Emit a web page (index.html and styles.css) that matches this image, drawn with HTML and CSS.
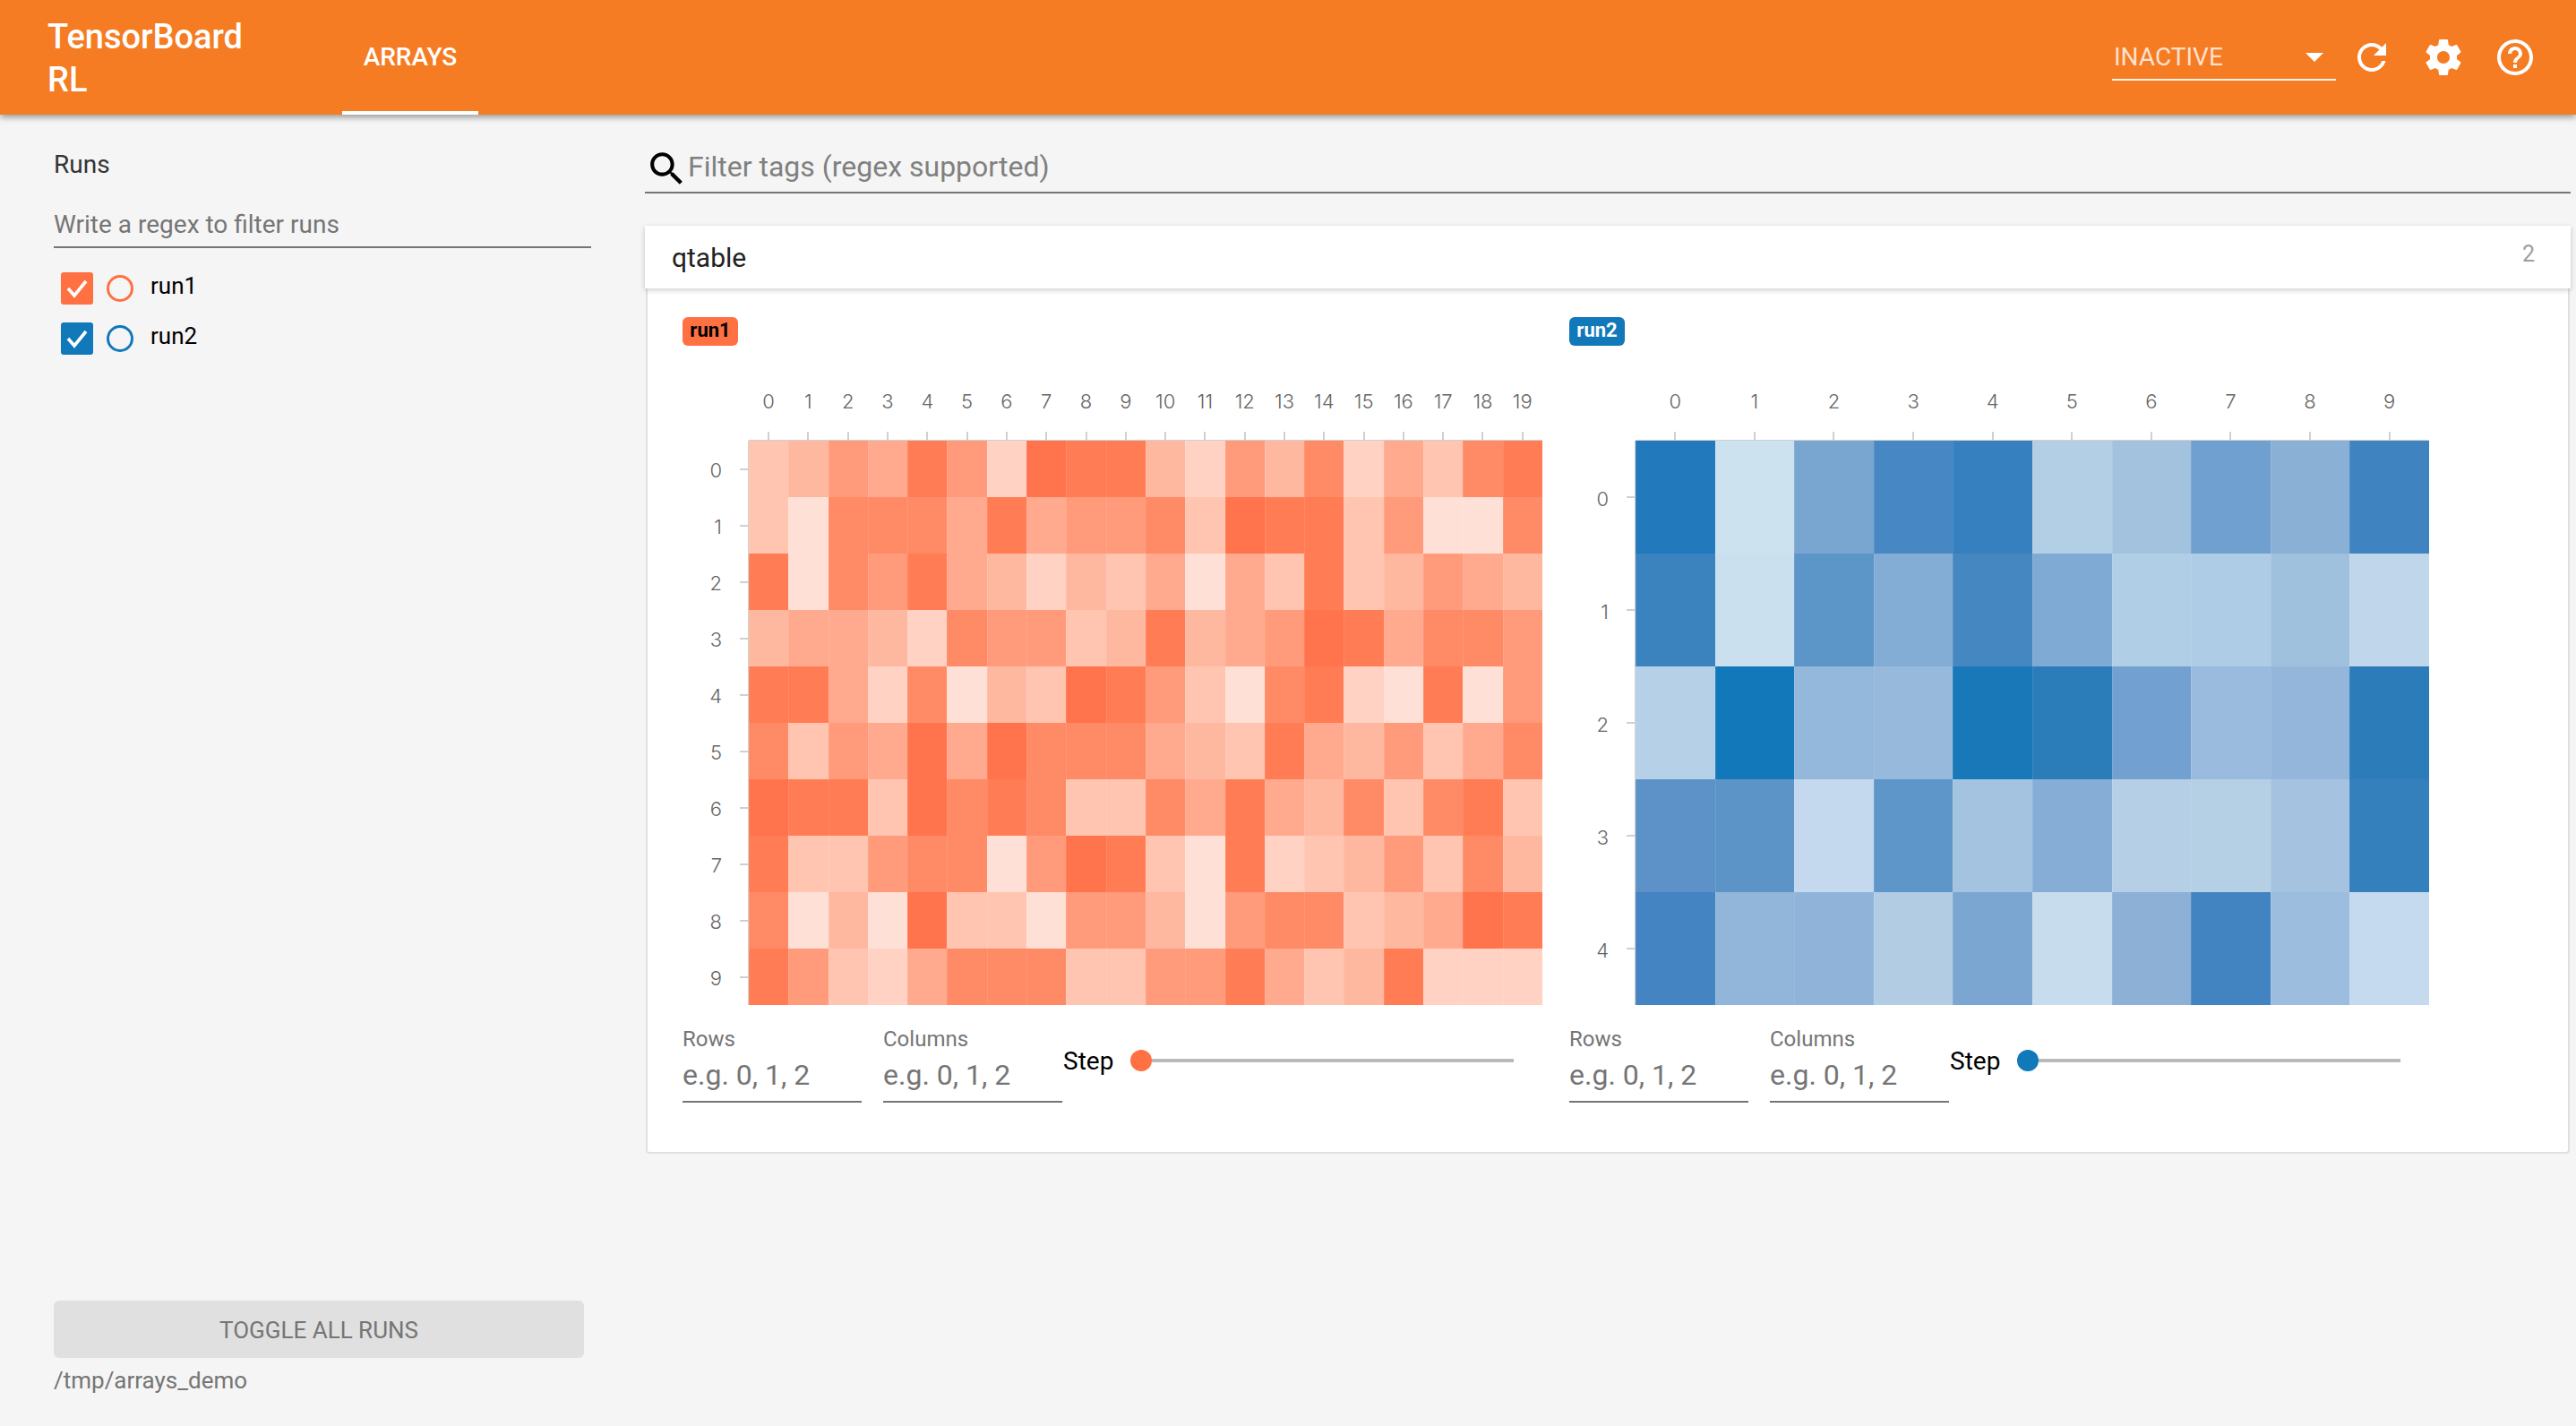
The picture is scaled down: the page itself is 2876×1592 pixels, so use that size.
FILE: index.html
```html
<!DOCTYPE html>
<html lang="en">
<head>
<meta charset="utf-8">
<title>TensorBoard RL</title>
<link rel="stylesheet" href="styles.css">
</head>
<body>
<header class="topbar">
  <div class="brand">TensorBoard<br>RL</div>
  <nav class="tabs"><a class="tab">ARRAYS</a></nav>
  <div class="topbar-right">
    <div class="select"><span>INACTIVE</span><i class="caret"></i></div>
    <button class="icon-btn"><svg viewBox="0 0 24 24"><path d="M17.65 6.35C16.2 4.9 14.21 4 12 4c-4.42 0-7.99 3.58-7.99 8s3.57 8 7.99 8c3.73 0 6.84-2.55 7.73-6h-2.08c-.82 2.33-3.04 4-5.65 4-3.31 0-6-2.69-6-6s2.69-6 6-6c1.66 0 3.14.69 4.22 1.78L13 11h7V4l-2.35 2.35z"/></svg></button>
    <button class="icon-btn"><svg viewBox="0 0 24 24"><path d="M19.43 12.98c.04-.32.07-.64.07-.98s-.03-.66-.07-.98l2.11-1.65c.19-.15.24-.42.12-.64l-2-3.46c-.12-.22-.39-.3-.61-.22l-2.49 1c-.52-.4-1.08-.73-1.69-.98l-.38-2.65C14.46 2.18 14.25 2 14 2h-4c-.25 0-.46.18-.49.42l-.38 2.65c-.61.25-1.17.59-1.69.98l-2.49-1c-.23-.09-.49 0-.61.22l-2 3.46c-.13.22-.07.49.12.64l2.11 1.65c-.04.32-.07.65-.07.98s.03.66.07.98l-2.11 1.65c-.19.15-.24.42-.12.64l2 3.46c.12.22.39.3.61.22l2.49-1c.52.4 1.08.73 1.69.98l.38 2.65c.03.24.24.42.49.42h4c.25 0 .46-.18.49-.42l.38-2.65c.61-.25 1.17-.59 1.69-.98l2.49 1c.23.09.49 0 .61-.22l2-3.46c.12-.22.07-.49-.12-.64l-2.11-1.65zM12 15.5c-1.93 0-3.5-1.57-3.5-3.5s1.57-3.5 3.5-3.5 3.5 1.57 3.5 3.5-1.57 3.5-3.5 3.5z"/></svg></button>
    <button class="icon-btn"><svg viewBox="0 0 24 24"><path d="M11 18h2v-2h-2v2zm1-16C6.48 2 2 6.48 2 12s4.48 10 10 10 10-4.48 10-10S17.52 2 12 2zm0 18c-4.41 0-8-3.59-8-8s3.59-8 8-8 8 3.59 8 8-3.59 8-8 8zm0-14c-2.21 0-4 1.79-4 4h2c0-1.1.9-2 2-2s2 .9 2 2c0 2-3 1.75-3 5h2c0-2.25 3-2.5 3-5 0-2.21-1.79-4-4-4z"/></svg></button>
  </div>
</header>
<div class="layout">
  <aside class="sidebar">
    <div class="runs-title">Runs</div>
    <div class="regex">Write a regex to filter runs</div>
    <div class="run-row">
      <span class="check run1-bg"><svg viewBox="0 0 36 36"><path d="M8 18l7 8 13-16"/></svg></span>
      <span class="radio run1-line"></span>
      <span class="run-name">run1</span>
    </div>
    <div class="run-row">
      <span class="check run2-bg"><svg viewBox="0 0 36 36"><path d="M8 18l7 8 13-16"/></svg></span>
      <span class="radio run2-line"></span>
      <span class="run-name">run2</span>
    </div>
    <button class="toggle">TOGGLE ALL RUNS</button>
    <div class="logdir">/tmp/arrays_demo</div>
  </aside>
  <main class="main">
    <div class="filter">
      <svg viewBox="0 0 24 24"><path d="M15.5 14h-.79l-.28-.27C15.41 12.59 16 11.11 16 9.5 16 5.91 13.09 3 9.5 3S3 5.91 3 9.5 5.91 16 9.5 16c1.61 0 3.09-.59 4.23-1.57l.27.28v.79l5 4.99L20.49 19l-4.99-5zm-6 0C7.01 14 5 11.99 5 9.5S7.01 5 9.5 5 14 7.01 14 9.5 11.99 14 9.5 14z"/></svg>
      <span>Filter tags (regex supported)</span>
    </div>
    <section class="card">
      <div class="card-head"><span class="card-title">qtable</span><span class="card-count">2</span></div>
      <div class="card-body">
        <div class="panel orange">
          <span class="badge">run1</span>
          <div class="chart">
            <div class="xaxis">
              <div class="xt"><span>0</span><i></i></div><div class="xt"><span>1</span><i></i></div><div class="xt"><span>2</span><i></i></div><div class="xt"><span>3</span><i></i></div><div class="xt"><span>4</span><i></i></div><div class="xt"><span>5</span><i></i></div><div class="xt"><span>6</span><i></i></div><div class="xt"><span>7</span><i></i></div><div class="xt"><span>8</span><i></i></div><div class="xt"><span>9</span><i></i></div><div class="xt"><span>10</span><i></i></div><div class="xt"><span>11</span><i></i></div><div class="xt"><span>12</span><i></i></div><div class="xt"><span>13</span><i></i></div><div class="xt"><span>14</span><i></i></div><div class="xt"><span>15</span><i></i></div><div class="xt"><span>16</span><i></i></div><div class="xt"><span>17</span><i></i></div><div class="xt"><span>18</span><i></i></div><div class="xt"><span>19</span><i></i></div>
            </div>
            <div class="yaxis">
              <div class="yt"><span>0</span><i></i></div><div class="yt"><span>1</span><i></i></div><div class="yt"><span>2</span><i></i></div><div class="yt"><span>3</span><i></i></div><div class="yt"><span>4</span><i></i></div><div class="yt"><span>5</span><i></i></div><div class="yt"><span>6</span><i></i></div><div class="yt"><span>7</span><i></i></div><div class="yt"><span>8</span><i></i></div><div class="yt"><span>9</span><i></i></div>
            </div>
            <div class="cells cells-wide">
              <i class="l3"></i><i class="l4"></i><i class="l6"></i><i class="l5"></i><i class="l8"></i><i class="l6"></i><i class="l2"></i><i class="l9"></i><i class="l8"></i><i class="l8"></i><i class="l4"></i><i class="l2"></i><i class="l6"></i><i class="l4"></i><i class="l7"></i><i class="l2"></i><i class="l5"></i><i class="l3"></i><i class="l7"></i><i class="l8"></i>
              <i class="l3"></i><i class="l1"></i><i class="l7"></i><i class="l7"></i><i class="l7"></i><i class="l5"></i><i class="l8"></i><i class="l5"></i><i class="l6"></i><i class="l6"></i><i class="l7"></i><i class="l3"></i><i class="l9"></i><i class="l8"></i><i class="l8"></i><i class="l3"></i><i class="l6"></i><i class="l1"></i><i class="l1"></i><i class="l7"></i>
              <i class="l8"></i><i class="l1"></i><i class="l7"></i><i class="l6"></i><i class="l8"></i><i class="l5"></i><i class="l4"></i><i class="l2"></i><i class="l4"></i><i class="l3"></i><i class="l5"></i><i class="l1"></i><i class="l5"></i><i class="l3"></i><i class="l8"></i><i class="l3"></i><i class="l4"></i><i class="l6"></i><i class="l5"></i><i class="l4"></i>
              <i class="l4"></i><i class="l5"></i><i class="l5"></i><i class="l4"></i><i class="l2"></i><i class="l7"></i><i class="l6"></i><i class="l6"></i><i class="l3"></i><i class="l4"></i><i class="l8"></i><i class="l4"></i><i class="l5"></i><i class="l6"></i><i class="l9"></i><i class="l8"></i><i class="l5"></i><i class="l7"></i><i class="l7"></i><i class="l6"></i>
              <i class="l8"></i><i class="l8"></i><i class="l5"></i><i class="l2"></i><i class="l7"></i><i class="l1"></i><i class="l4"></i><i class="l3"></i><i class="l9"></i><i class="l8"></i><i class="l6"></i><i class="l3"></i><i class="l1"></i><i class="l7"></i><i class="l8"></i><i class="l2"></i><i class="l1"></i><i class="l8"></i><i class="l1"></i><i class="l6"></i>
              <i class="l7"></i><i class="l3"></i><i class="l6"></i><i class="l5"></i><i class="l9"></i><i class="l5"></i><i class="l9"></i><i class="l7"></i><i class="l7"></i><i class="l7"></i><i class="l5"></i><i class="l4"></i><i class="l3"></i><i class="l8"></i><i class="l5"></i><i class="l4"></i><i class="l6"></i><i class="l3"></i><i class="l5"></i><i class="l7"></i>
              <i class="l9"></i><i class="l8"></i><i class="l8"></i><i class="l3"></i><i class="l9"></i><i class="l7"></i><i class="l8"></i><i class="l7"></i><i class="l3"></i><i class="l3"></i><i class="l7"></i><i class="l5"></i><i class="l8"></i><i class="l5"></i><i class="l4"></i><i class="l7"></i><i class="l3"></i><i class="l7"></i><i class="l8"></i><i class="l3"></i>
              <i class="l8"></i><i class="l3"></i><i class="l3"></i><i class="l6"></i><i class="l7"></i><i class="l7"></i><i class="l1"></i><i class="l6"></i><i class="l9"></i><i class="l8"></i><i class="l3"></i><i class="l1"></i><i class="l8"></i><i class="l2"></i><i class="l3"></i><i class="l4"></i><i class="l6"></i><i class="l3"></i><i class="l7"></i><i class="l4"></i>
              <i class="l7"></i><i class="l1"></i><i class="l4"></i><i class="l1"></i><i class="l9"></i><i class="l3"></i><i class="l3"></i><i class="l1"></i><i class="l6"></i><i class="l6"></i><i class="l4"></i><i class="l1"></i><i class="l6"></i><i class="l7"></i><i class="l7"></i><i class="l3"></i><i class="l4"></i><i class="l5"></i><i class="l9"></i><i class="l8"></i>
              <i class="l8"></i><i class="l6"></i><i class="l3"></i><i class="l2"></i><i class="l5"></i><i class="l7"></i><i class="l7"></i><i class="l7"></i><i class="l3"></i><i class="l3"></i><i class="l6"></i><i class="l6"></i><i class="l8"></i><i class="l5"></i><i class="l3"></i><i class="l4"></i><i class="l8"></i><i class="l2"></i><i class="l2"></i><i class="l2"></i>
            </div>
          </div>
          <div class="controls">
            <div class="field"><label>Rows</label><div class="field-input">e.g. 0, 1, 2</div></div>
            <div class="field"><label>Columns</label><div class="field-input">e.g. 0, 1, 2</div></div>
            <div class="step"><span>Step</span><i class="thumb"></i><i class="track"></i></div>
          </div>
        </div>
        <div class="panel blue">
          <span class="badge">run2</span>
          <div class="chart">
            <div class="xaxis">
              <div class="xt"><span>0</span><i></i></div><div class="xt"><span>1</span><i></i></div><div class="xt"><span>2</span><i></i></div><div class="xt"><span>3</span><i></i></div><div class="xt"><span>4</span><i></i></div><div class="xt"><span>5</span><i></i></div><div class="xt"><span>6</span><i></i></div><div class="xt"><span>7</span><i></i></div><div class="xt"><span>8</span><i></i></div><div class="xt"><span>9</span><i></i></div>
            </div>
            <div class="yaxis">
              <div class="yt"><span>0</span><i></i></div><div class="yt"><span>1</span><i></i></div><div class="yt"><span>2</span><i></i></div><div class="yt"><span>3</span><i></i></div><div class="yt"><span>4</span><i></i></div>
            </div>
            <div class="cells cells-narrow">
              <i style="background:#2279bb"></i><i style="background:#cde2ef"></i><i style="background:#79a6d0"></i><i style="background:#4787c4"></i><i style="background:#3680bf"></i><i style="background:#b3cfe5"></i><i style="background:#a2c2de"></i><i style="background:#70a0d0"></i><i style="background:#8bb0d6"></i><i style="background:#3f84c0"></i>
              <i style="background:#3a83bf"></i><i style="background:#cae0ef"></i><i style="background:#5c95c8"></i><i style="background:#83add5"></i><i style="background:#4587c1"></i><i style="background:#7eaad3"></i><i style="background:#b0cee6"></i><i style="background:#aecce5"></i><i style="background:#a0c1de"></i><i style="background:#c0d6eb"></i>
              <i style="background:#b6d0e8"></i><i style="background:#1278b9"></i><i style="background:#94b8db"></i><i style="background:#97b9dc"></i><i style="background:#1878b8"></i><i style="background:#2b7db9"></i><i style="background:#72a1d1"></i><i style="background:#9abbdd"></i><i style="background:#94b6da"></i><i style="background:#2c7cb9"></i>
              <i style="background:#5c92c8"></i><i style="background:#5c94c8"></i><i style="background:#c4d9ee"></i><i style="background:#5f96c9"></i><i style="background:#a4c3e0"></i><i style="background:#85add5"></i><i style="background:#b5d0e6"></i><i style="background:#b5cfe5"></i><i style="background:#a5c3e1"></i><i style="background:#3380bd"></i>
              <i style="background:#4484c3"></i><i style="background:#92b6d9"></i><i style="background:#8fb3d9"></i><i style="background:#b2cde3"></i><i style="background:#7ca6d2"></i><i style="background:#c7dded"></i><i style="background:#8db0d7"></i><i style="background:#4283c1"></i><i style="background:#9cbddd"></i><i style="background:#c5d9ef"></i>
            </div>
          </div>
          <div class="controls">
            <div class="field"><label>Rows</label><div class="field-input">e.g. 0, 1, 2</div></div>
            <div class="field"><label>Columns</label><div class="field-input">e.g. 0, 1, 2</div></div>
            <div class="step"><span>Step</span><i class="thumb"></i><i class="track"></i></div>
          </div>
        </div>
      </div>
    </section>
  </main>
</div>
</body>
</html>
```
FILE: styles.css
```css
* { box-sizing: border-box; }
html, body { height: 100%; }
body {
  margin: 0;
  display: flex;
  flex-direction: column;
  background: #f5f5f5;
  font-family: Roboto, "Liberation Sans", sans-serif;
  color: #212121;
  overflow: hidden;
}

/* top bar */
.topbar {
  position: relative;
  z-index: 2;
  flex: none;
  height: 128px;
  display: flex;
  align-items: stretch;
  padding: 0 28px 0 53px;
  background: #f57c23;
  color: #fff;
  box-shadow: 0 3px 7px rgba(0, 0, 0, .38);
}
.brand {
  width: 329px;
  padding-top: 17px;
  font-size: 38px;
  font-weight: 500;
  line-height: 48px;
}
.tabs { display: flex; }
.tab {
  width: 152px;
  padding-top: 47px;
  text-align: center;
  font-size: 28px;
  font-weight: 500;
  line-height: 34px;
  border-bottom: 4px solid #fff;
}
.topbar-right {
  margin-left: auto;
  display: flex;
  align-items: center;
}
.select {
  width: 250px;
  height: 50px;
  margin: 40px 0 0;
  padding: 0 14px 0 2px;
  align-self: flex-start;
  display: flex;
  align-items: center;
  justify-content: space-between;
  border-bottom: 2px solid rgba(255, 255, 255, .9);
  font-size: 28px;
  color: rgba(255, 255, 255, .78);
}
.select span { margin-top: -2px; }
.caret {
  width: 0;
  height: 0;
  border: 10px solid transparent;
  border-top-color: #fff;
  border-bottom-width: 0;
}
.icon-btn {
  width: 80px;
  height: 80px;
  padding: 16px;
  border: 0;
  background: none;
}
.icon-btn svg { display: block; width: 48px; height: 48px; fill: #fff; }

/* layout */
.layout { flex: 1; display: flex; min-height: 0; }

/* sidebar */
.sidebar {
  flex: none;
  width: 720px;
  padding: 40px 60px 0;
  display: flex;
  flex-direction: column;
}
.runs-title { font-size: 28px; line-height: 32px; color: #333; }
.regex {
  margin-top: 32px;
  height: 45px;
  padding-top: 1px;
  font-size: 28px;
  line-height: 36px;
  color: #757575;
  border-bottom: 2px solid #757575;
}
.run-row {
  height: 36px;
  margin: 27px 0 0 8px;
  display: flex;
  align-items: center;
}
.run-row + .run-row { margin-top: 20px; }
.check { flex: none; width: 36px; height: 36px; border-radius: 3px; }
.check svg { display: block; fill: none; stroke: #fff; stroke-width: 3.6; }
.radio {
  flex: none;
  width: 30px;
  height: 30px;
  margin: 0 0 0 15px;
  border-radius: 50%;
  border: 3px solid;
}
.run-name { margin: -6px 0 0 19px; font-size: 26px; color: #000; }
.run1-bg { background: #ff7043; }
.run2-bg { background: #1178ba; }
.run1-line { border-color: #ff7043; }
.run2-line { border-color: #1178ba; }
.toggle {
  margin-top: auto;
  width: 592px;
  height: 64px;
  padding: 2px 0 0;
  flex: none;
  border: 0;
  border-radius: 6px;
  background: #e0e0e0;
  color: #757575;
  font: 400 26px Roboto, sans-serif;
}
.logdir {
  flex: none;
  height: 76px;
  padding-top: 8px;
  font-size: 26px;
  line-height: 34px;
  color: #757575;
}

/* main */
.main { flex: 1; min-width: 0; padding: 0 6px 0 0; }
.filter {
  height: 88px;
  padding: 38px 0 0 0;
  display: flex;
  align-items: flex-start;
  border-bottom: 2px solid #757575;
}
.filter svg { flex: none; width: 49px; height: 49px; margin-top: -2px; fill: #000; }
.filter span { font-size: 32px; line-height: 40px; color: #808080; margin-left: -1px; }

.card { margin-top: 36px; }
.card-head {
  position: relative;
  height: 70px;
  padding: 0 40px 0 30px;
  display: flex;
  align-items: center;
  justify-content: space-between;
  background: #fff;
  box-shadow: 0 2px 6px rgba(0, 0, 0, .2);
}
.card-title { font-size: 30px; color: #212121; }
.card-count { margin-top: -8px; font-size: 25px; color: #9e9e9e; }
.card-body {
  height: 966px;
  margin: 0 1px;
  padding: 32px 0 0 39px;
  display: flex;
  background: #fff;
  border: 2px solid #e0e0e0;
  border-top: 0;
  border-radius: 0 0 4px 4px;
}
.panel { flex: none; width: 990px; }
.badge {
  display: block;
  width: 62px;
  height: 32px;
  border-radius: 6px;
  text-align: center;
  font-size: 22px;
  font-weight: 700;
  line-height: 30px;
}
.orange .badge { background: #ff7043; color: #000; }
.blue .badge { background: #1178ba; color: #fff; }

/* chart */
.chart {
  display: grid;
  grid-template-columns: 74px 886px;
  grid-template-rows: 106px 630px;
  grid-template-areas: ". x" "y c";
}
.xaxis {
  grid-area: x;
  display: flex;
  border-bottom: 1px solid #d0d0d0;
}
.xt {
  flex: 1;
  display: flex;
  flex-direction: column;
  align-items: center;
  justify-content: flex-end;
  gap: 22px;
}
.xt i { width: 2px; height: 9px; background: #d0d0d0; }
.yaxis {
  grid-area: y;
  display: flex;
  flex-direction: column;
  border-right: 1px solid #d0d0d0;
}
.yt {
  flex: 1;
  display: flex;
  align-items: center;
  justify-content: flex-end;
  gap: 20px;
}
.yt i { width: 9px; height: 2px; background: #d0d0d0; }
.yt span { margin-top: 3px; }
.xt span, .yt span {
  font-family: Inter, Roboto, sans-serif;
  font-size: 22px;
  font-weight: 300;
  line-height: 24px;
  color: #666;
}
.cells { grid-area: c; display: grid; }
.cells i { box-shadow: inset 1px 0 rgba(255, 255, 255, .1); }
.cells-wide { grid-template-columns: repeat(20, 1fr); grid-template-rows: repeat(10, 1fr); }
.cells-narrow { grid-template-columns: repeat(10, 1fr); grid-template-rows: repeat(5, 1fr); }
.l1 { background: #fee0d6; }
.l2 { background: #ffd2c3; }
.l3 { background: #ffc5b1; }
.l4 { background: #ffb8a0; }
.l5 { background: #ffa98e; }
.l6 { background: #ff9a7b; }
.l7 { background: #ff8a66; }
.l8 { background: #ff7c55; }
.l9 { background: #ff734d; }

/* controls */
.controls { margin-top: 26px; display: flex; align-items: flex-start; }
.field { flex: none; width: 200px; margin-right: 24px; }
.field label { display: block; font-size: 24px; line-height: 24px; color: #757575; }
.field-input {
  height: 59px;
  padding-top: 9px;
  font-size: 32px;
  line-height: 38px;
  color: #757575;
  border-bottom: 2px solid #757575;
}
.step {
  flex: none;
  width: 503px;
  margin: 24px 0 0 -23px;
  display: flex;
  align-items: center;
  height: 24px;
}
.step span { font-size: 28px; color: #000; width: 75px; }
.thumb { flex: none; width: 24px; height: 24px; border-radius: 50%; }
.track { flex: 1; height: 4px; background: #bababa; }
.orange .thumb { background: #ff7043; }
.blue .thumb { background: #1178ba; }
```
